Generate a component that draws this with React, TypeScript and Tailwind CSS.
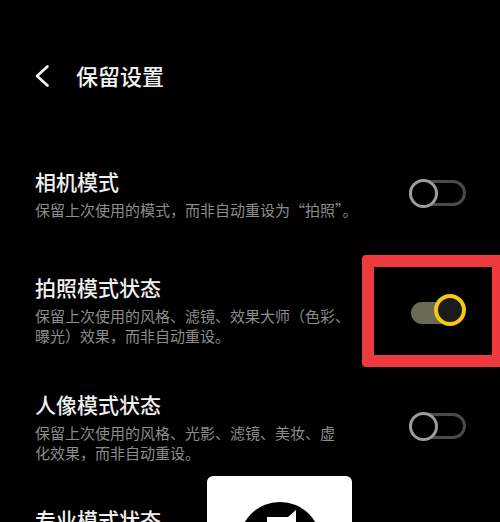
import React from "react";

const CJK = "font-['Noto_Sans_CJK_SC','Noto_Sans',sans-serif]";

function ToggleOff() {
  return (
    <div className="relative w-[57px] h-[29px] shrink-0">
      <div className="absolute left-0 right-0 top-[1px] h-[26px] rounded-full border-[3px] border-[#4a4a4a]" />
      <div className="absolute left-0 top-0 w-[29px] h-[29px] rounded-full border-[3px] border-[#9c9c9c] bg-black" />
    </div>
  );
}

function ToggleOn() {
  return (
    <div className="relative w-[55px] h-[32px] shrink-0">
      <div className="absolute left-0 top-[8px] w-[40px] h-[22px] rounded-full bg-[#6c6a55]" />
      <div className="absolute right-0 top-0 w-[32px] h-[32px] rounded-full border-[4px] border-[#f3c912] bg-[#1b1b1b]" />
    </div>
  );
}

interface RowProps {
  title: string;
  lines: string[];
  on?: boolean;
  className?: string;
}

function Row({ title, lines, on, className }: RowProps) {
  return (
    <div className={`flex items-center justify-between ${className ?? ""}`}>
      <div>
        <div className="text-[21px] leading-[28px] font-medium text-[#efefef]">{title}</div>
        <div className="mt-[5px] text-[15px] leading-[20px] text-[#8d8d8d]">
          {lines.map((l) => (
            <div key={l} className="whitespace-nowrap">{l}</div>
          ))}
        </div>
      </div>
      {on ? <ToggleOn /> : <ToggleOff />}
    </div>
  );
}

export default function App() {
  return (
    <div className={`relative w-full h-[522px] overflow-hidden bg-black ${CJK}`}>
      <div className="pl-[35px] pr-[34px] pt-[50px]">
        {/* header */}
        <div className="flex items-center h-[51px]">
          <svg width="14" height="22" viewBox="0 0 14 22" fill="none">
            <polyline points="12.5,1.5 2,11 12.5,20.5" stroke="#f2f2f2" strokeWidth="2.6" strokeLinecap="round" strokeLinejoin="round" />
          </svg>
          <span className="ml-[27px] text-[22px] font-medium text-[#f2f2f2]">保留设置</span>
        </div>

        <Row
          className="mt-[66px]"
          title="相机模式"
          lines={["保留上次使用的模式，而非自动重设为“拍照”。"]}
        />
        <Row
          className="mt-[53px]"
          title="拍照模式状态"
          lines={["保留上次使用的风格、滤镜、效果大师（色彩、", "曝光）效果，而非自动重设。"]}
          on
        />
        <Row
          className="mt-[44px]"
          title="人像模式状态"
          lines={["保留上次使用的风格、光影、滤镜、美妆、虚", "化效果，而非自动重设。"]}
        />
        <div className="mt-[42px] text-[21px] leading-[28px] font-medium text-[#efefef]">专业模式状态</div>
      </div>

      {/* red highlight annotation */}
      <div className="absolute left-[362px] top-[255px] w-[142px] h-[112px] rounded-[4px] border-[12px] border-[#ee3a3e]" />

      {/* white logo card overlay */}
      <div className="absolute left-[207px] top-[476px] w-[145px] h-[70px] rounded-[6px] bg-white overflow-hidden">
        <svg width="145" height="70" viewBox="0 0 145 70">
          <circle cx="73" cy="67" r="41" fill="#000" />
          <polygon points="60,41 81,41 89,34 89,70 60,70" fill="#fff" />
        </svg>
      </div>
    </div>
  );
}
